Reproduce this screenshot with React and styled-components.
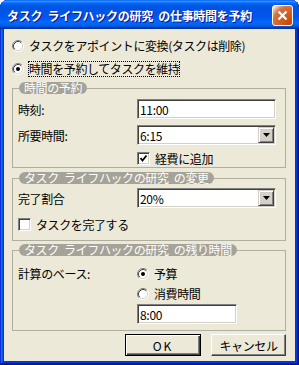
import React from 'react'
import styled, { createGlobalStyle } from 'styled-components'

const GlobalStyle = createGlobalStyle`
  html, body {
    margin: 0;
    padding: 0;
    background: #fff;
  }
  body {
    font-family: "Noto Sans CJK JP", "Noto Sans", sans-serif;
    font-size: 12px;
    color: #000;
  }
`

const Window = styled.div`
  width: 299px;
  height: 365px;
  display: flex;
  flex-direction: column;
  background: #0831d9;
  border-radius: 8px 8px 0 0;
  overflow: hidden;
  box-shadow: inset -1px -1px #00138c, inset 1px 1px #0831d9, inset -2px -2px #001ea0,
    inset 2px 2px #166aee, inset -3px -3px #003bda, inset 3px 3px #0855dd;
`

const TitleBar = styled.div`
  height: 29px;
  flex-shrink: 0;
  display: flex;
  align-items: center;
  justify-content: space-between;
  padding: 0 6px 0 7px;
  background: linear-gradient(
    to bottom,
    #0058ee 0%,
    #3593ff 4%,
    #288eff 6%,
    #127dff 8%,
    #036ffc 10%,
    #0262ee 14%,
    #0057e5 20%,
    #0054e3 24%,
    #0055eb 56%,
    #005bf5 66%,
    #026afe 76%,
    #0062ef 86%,
    #0052d6 92%,
    #0040ab 94%,
    #003092 100%
  );
`

const Title = styled.span`
  color: #fff;
  font-weight: bold;
  font-size: 12px;
  letter-spacing: -0.3px;
  word-spacing: 3px;
  white-space: nowrap;
  text-shadow: 1px 1px #0f1089;
  margin-top: 1px;
`

const CloseButton = styled.div`
  width: 21px;
  height: 21px;
  box-sizing: border-box;
  border: 1px solid #fff;
  border-radius: 3px;
  display: flex;
  align-items: center;
  justify-content: center;
  margin-top: 2px;
  background: radial-gradient(circle at 90% 90%, #cc4600 0, #dc6527 55%, #cd7546 70%, #ffccb2 90%, #fff 100%);
`

const Body = styled.div`
  flex: 1;
  margin: 0 4px 4px;
  background: #ece9d8;
  padding: 8px 9px 5px 8px;
  display: flex;
  flex-direction: column;
`

const OptionRow = styled.div`
  height: 18px;
  display: flex;
  align-items: center;
  gap: 4px;
  margin-top: ${({ $top }) => $top || 0}px;
`

const FocusLabel = styled.span`
  border: 1px dotted ${({ $focus }) => ($focus ? '#000' : 'transparent')};
  line-height: 14px;
  letter-spacing: -0.4px;
  white-space: nowrap;
`

const Group = styled.fieldset`
  margin: ${({ $top }) => $top}px 0 0;
  padding: ${({ $pt }) => $pt}px 0 ${({ $pb }) => $pb}px 5px;
  border: 1px solid #b0ae9f;
  min-width: 0;
`

const Legend = styled.legend`
  margin-left: 1px;
  padding: 0 5px;
  height: 12px;
  line-height: 12px;
  background: #a5a398;
  color: #fff;
  border-radius: 6px;
  font-size: 12px;
  letter-spacing: -0.4px;
  word-spacing: 3px;
  white-space: nowrap;
`

const FieldRow = styled.div`
  display: grid;
  grid-template-columns: 119px auto;
  align-items: center;
  height: ${({ $h }) => $h}px;
  margin-top: ${({ $top }) => $top || 0}px;
`

const Label = styled.span`
  letter-spacing: -0.4px;
  white-space: nowrap;
`

const Sunken = styled.div`
  box-sizing: border-box;
  width: ${({ $w }) => $w}px;
  height: 20px;
  background: #fff;
  border: 1px solid;
  border-color: #808080 #fff #fff #808080;
  box-shadow: inset 1px 1px #404040, inset -1px -1px #d4d0c8;
  display: flex;
  align-items: center;
  justify-content: space-between;
  padding: 0 1px 0 2px;
  font-size: 12px;
  letter-spacing: -0.3px;
`

const DropButton = styled.div`
  width: 16px;
  height: 16px;
  box-sizing: border-box;
  background: #d4d0c8;
  border: 1px solid;
  border-color: #d4d0c8 #404040 #404040 #d4d0c8;
  box-shadow: inset 1px 1px #fff, inset -1px -1px #808080;
  display: flex;
  align-items: center;
  justify-content: center;
`

const CheckRow = styled.label`
  display: flex;
  align-items: center;
  gap: 5px;
  letter-spacing: -0.4px;
  white-space: nowrap;
`

const CheckBox = styled.span`
  width: 13px;
  height: 13px;
  box-sizing: border-box;
  background: #fff;
  border: 1px solid;
  border-color: #808080 #fff #fff #808080;
  box-shadow: inset 1px 1px #404040, inset -1px -1px #d4d0c8;
  display: flex;
  align-items: center;
  justify-content: center;
  flex-shrink: 0;
`

const ButtonBar = styled.div`
  display: flex;
  justify-content: flex-end;
  gap: 10px;
  margin-top: 3px;
`

const Button = styled.div`
  width: ${({ $w }) => $w}px;
  height: 22px;
  box-sizing: border-box;
  display: flex;
  align-items: center;
  justify-content: center;
  background: #ece9d8;
  border: 1px solid;
  border-color: ${({ $default }) => ($default ? '#000' : '#fff #404040 #404040 #fff')};
  box-shadow: ${({ $default }) =>
    $default
      ? 'inset 1px 1px #fff, inset -1px -1px #404040, inset -2px -2px #808080'
      : 'inset -1px -1px #808080'};
  font-size: 12px;
  letter-spacing: ${({ $spaced }) => ($spaced ? '2px' : '-0.4px')};
`

const Radio = ({ checked }) => (
  <svg width='12' height='12' viewBox='0 0 12 12' style={{ flexShrink: 0 }}>
    <circle cx='6' cy='6' r='5' fill='#fff' />
    <path d='M2.11 9.89 A5.5 5.5 0 0 1 9.89 2.11' stroke='#808080' fill='none' />
    <path d='M9.89 2.11 A5.5 5.5 0 0 1 2.11 9.89' stroke='#fff' fill='none' />
    <path d='M2.82 9.18 A4.5 4.5 0 0 1 9.18 2.82' stroke='#404040' fill='none' />
    <path d='M9.18 2.82 A4.5 4.5 0 0 1 2.82 9.18' stroke='#d4d0c8' fill='none' />
    {checked && <circle cx='6' cy='6' r='2' fill='#000' />}
  </svg>
)

const Check = ({ checked }) => (
  <CheckBox>
    {checked && (
      <svg width='9' height='9' viewBox='0 0 9 9'>
        <polyline points='1.5,4 3.5,6.5 7.5,1.5' stroke='#000' strokeWidth='1.8' fill='none' />
      </svg>
    )}
  </CheckBox>
)

const Arrow = () => (
  <svg width='7' height='4' viewBox='0 0 7 4'>
    <polygon points='0,0 7,0 3.5,4' fill='#000' />
  </svg>
)

const Combo = ({ value, width }) => (
  <Sunken $w={width}>
    <span>{value}</span>
    <DropButton>
      <Arrow />
    </DropButton>
  </Sunken>
)

const App = () => (
  <>
    <GlobalStyle />
    <Window>
      <TitleBar>
        <Title>タスク ライフハックの研究 の仕事時間を予約</Title>
        <CloseButton>
          <svg width='11' height='11' viewBox='0 0 11 11'>
            <path d='M1.5 1.5 L9.5 9.5 M9.5 1.5 L1.5 9.5' stroke='#fff' strokeWidth='2.2' />
          </svg>
        </CloseButton>
      </TitleBar>
      <Body>
        <OptionRow>
          <Radio />
          <FocusLabel>タスクをアポイントに変換(タスクは削除)</FocusLabel>
        </OptionRow>
        <OptionRow $top={5}>
          <Radio checked />
          <FocusLabel $focus>時間を予約してタスクを維持</FocusLabel>
        </OptionRow>

        <Group $top={4} $pt={5} $pb={3}>
          <Legend>時間の予約</Legend>
          <FieldRow $h={20}>
            <Label>時刻:</Label>
            <Sunken $w={139}>11:00</Sunken>
          </FieldRow>
          <FieldRow $h={20} $top={6}>
            <Label>所要時間:</Label>
            <Combo value='6:15' width={139} />
          </FieldRow>
          <FieldRow $h={14} $top={5}>
            <span />
            <CheckRow>
              <Check checked />
              経費に追加
            </CheckRow>
          </FieldRow>
        </Group>

        <Group $top={4} $pt={4} $pb={10}>
          <Legend>タスク ライフハックの研究 の変更</Legend>
          <FieldRow $h={20}>
            <Label>完了割合</Label>
            <Combo value='20%' width={139} />
          </FieldRow>
          <FieldRow $h={14} $top={8}>
            <CheckRow>
              <Check />
              タスクを完了する
            </CheckRow>
          </FieldRow>
        </Group>

        <Group $top={3} $pt={9} $pb={6}>
          <Legend>タスク ライフハックの研究 の残り時間</Legend>
          <FieldRow $h={14}>
            <Label>計算のベース:</Label>
            <CheckRow>
              <Radio checked />
              予算
            </CheckRow>
          </FieldRow>
          <FieldRow $h={14} $top={6}>
            <span />
            <CheckRow>
              <Radio />
              消費時間
            </CheckRow>
          </FieldRow>
          <FieldRow $h={20} $top={5}>
            <span />
            <Sunken $w={100}>8:00</Sunken>
          </FieldRow>
        </Group>

        <ButtonBar>
          <Button $w={76} $default $spaced>
            OK
          </Button>
          <Button $w={75}>キャンセル</Button>
        </ButtonBar>
      </Body>
    </Window>
  </>
)

export default App
